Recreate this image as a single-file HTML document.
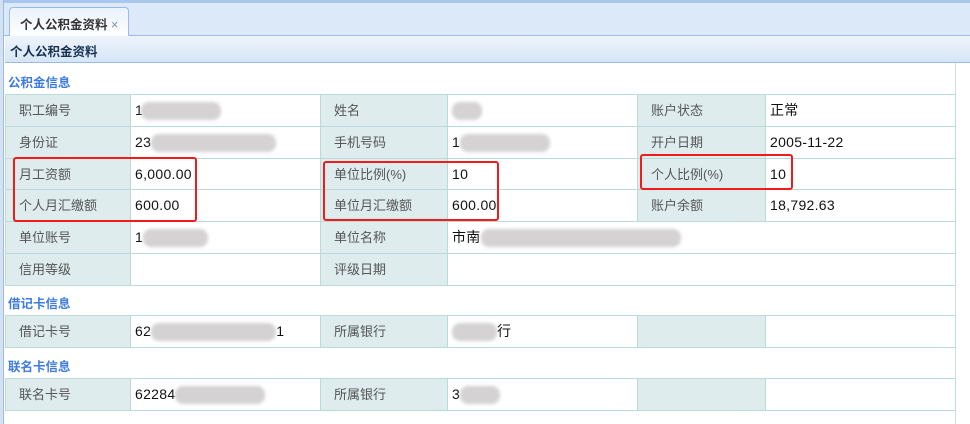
<!DOCTYPE html>
<html><head><meta charset="utf-8"><style>
*{margin:0;padding:0;box-sizing:border-box}
body{width:970px;height:424px;background:#fff;position:relative;overflow:hidden;font-family:"Liberation Sans","Noto Sans CJK SC",sans-serif;font-size:13px;color:#222}
.a{position:absolute}
.lab{position:absolute;background:#deecee;color:#555;padding-left:13px;line-height:31px;border:1px solid #b9dcd8}
.val{position:absolute;background:#fff;padding-left:4px;line-height:31px;border:1px solid #b9dcd8;color:#111;font-size:14px;letter-spacing:0.3px}
.sec{position:absolute;left:8px;color:#3d7be3;font-weight:bold;font-size:12.5px}
.blur{display:inline-block;vertical-align:middle;height:18px;background:#d4d2d2;border-radius:8px;filter:blur(1.5px)}
.red{position:absolute;border:2.5px solid #f21b1b;border-radius:3px}
</style></head><body>
<div class="a" style="left:0;top:0;width:970px;height:36px;background:#dce9f9;border-top:3px solid #a9c6ec;border-bottom:1px solid #99bbe8"></div>
<div class="a" style="left:0;top:0;width:4px;height:424px;background:#d3e1f1;border-right:1px solid #99bbe8"></div>
<div class="a" style="left:9px;top:7px;width:120px;height:30px;background:linear-gradient(#eaf2fc,#fff);border:1px solid #99bbe8;border-bottom:none;border-radius:4px 4px 0 0;font-size:12.5px;font-weight:bold;color:#333;padding:6px 0 0 10px">个人公积金资料 <span style="color:#7a8fb0;font-weight:normal">×</span></div>
<div class="a" style="left:5px;top:36px;width:965px;height:27px;background:linear-gradient(#eef4fc,#d6e5f7);border-bottom:1px solid #99bbe8;font-weight:bold;font-size:12.5px;color:#15314f;padding:5px 0 0 5px">个人公积金资料</div>
<div class="a" style="left:955px;top:63px;width:1px;height:361px;background:#cfe0e0"></div>
<div class="a" style="left:5px;top:94px;width:950px;height:1px;background:#b9dcd8"></div>
<div class="sec" style="top:72px">公积金信息</div>
<div class="sec" style="top:293px">借记卡信息</div>
<div class="sec" style="top:356px">联名卡信息</div>

<div class="lab" style="left:5px;top:94px;width:126px;height:33px">职工编号</div>
<div class="val" style="left:130px;top:94px;width:191px;height:33px">1<span class="blur" style="width:80px;margin-left:-2px"></span></div>
<div class="lab" style="left:320px;top:94px;width:128px;height:33px">姓名</div>
<div class="val" style="left:447px;top:94px;width:191px;height:33px"><span class="blur" style="width:30px"></span></div>
<div class="lab" style="left:637px;top:94px;width:129px;height:33px">账户状态</div>
<div class="val" style="left:765px;top:94px;width:191px;height:33px">正常</div>

<div class="lab" style="left:5px;top:126px;width:126px;height:33px">身份证</div>
<div class="val" style="left:130px;top:126px;width:191px;height:33px">23<span class="blur" style="width:125px"></span></div>
<div class="lab" style="left:320px;top:126px;width:128px;height:33px">手机号码</div>
<div class="val" style="left:447px;top:126px;width:191px;height:33px">1<span class="blur" style="width:90px"></span></div>
<div class="lab" style="left:637px;top:126px;width:129px;height:33px">开户日期</div>
<div class="val" style="left:765px;top:126px;width:191px;height:33px">2005-11-22</div>

<div class="lab" style="left:5px;top:158px;width:126px;height:32px">月工资额</div>
<div class="val" style="left:130px;top:158px;width:191px;height:32px">6,000.00</div>
<div class="lab" style="left:320px;top:158px;width:128px;height:32px">单位比例(%)</div>
<div class="val" style="left:447px;top:158px;width:191px;height:32px">10</div>
<div class="lab" style="left:637px;top:158px;width:129px;height:32px">个人比例(%)</div>
<div class="val" style="left:765px;top:158px;width:191px;height:32px">10</div>

<div class="lab" style="left:5px;top:189px;width:126px;height:33px">个人月汇缴额</div>
<div class="val" style="left:130px;top:189px;width:191px;height:33px">600.00</div>
<div class="lab" style="left:320px;top:189px;width:128px;height:33px">单位月汇缴额</div>
<div class="val" style="left:447px;top:189px;width:191px;height:33px">600.00</div>
<div class="lab" style="left:637px;top:189px;width:129px;height:33px">账户余额</div>
<div class="val" style="left:765px;top:189px;width:191px;height:33px">18,792.63</div>

<div class="lab" style="left:5px;top:221px;width:126px;height:33px">单位账号</div>
<div class="val" style="left:130px;top:221px;width:191px;height:33px">1<span class="blur" style="width:65px"></span></div>
<div class="lab" style="left:320px;top:221px;width:128px;height:33px">单位名称</div>
<div class="val" style="left:447px;top:221px;width:509px;height:33px">市南<span class="blur" style="width:200px"></span></div>

<div class="lab" style="left:5px;top:253px;width:126px;height:33px">信用等级</div>
<div class="val" style="left:130px;top:253px;width:191px;height:33px"></div>
<div class="lab" style="left:320px;top:253px;width:128px;height:33px">评级日期</div>
<div class="val" style="left:447px;top:253px;width:509px;height:33px"></div>

<div class="a" style="left:5px;top:315px;width:950px;height:1px;background:#b9dcd8"></div>
<div class="lab" style="left:5px;top:315px;width:126px;height:33px">借记卡号</div>
<div class="val" style="left:130px;top:315px;width:191px;height:33px">62<span class="blur" style="width:125px"></span>1</div>
<div class="lab" style="left:320px;top:315px;width:128px;height:33px">所属银行</div>
<div class="val" style="left:447px;top:315px;width:191px;height:33px"><span class="blur" style="width:45px"></span>行</div>
<div class="lab" style="left:637px;top:315px;width:129px;height:33px"></div>
<div class="val" style="left:765px;top:315px;width:191px;height:33px"></div>

<div class="a" style="left:5px;top:378px;width:950px;height:1px;background:#b9dcd8"></div>
<div class="lab" style="left:5px;top:378px;width:126px;height:33px">联名卡号</div>
<div class="val" style="left:130px;top:378px;width:191px;height:33px">62284<span class="blur" style="width:90px"></span></div>
<div class="lab" style="left:320px;top:378px;width:128px;height:33px">所属银行</div>
<div class="val" style="left:447px;top:378px;width:191px;height:33px">3<span class="blur" style="width:40px"></span></div>
<div class="lab" style="left:637px;top:378px;width:129px;height:33px"></div>
<div class="val" style="left:765px;top:378px;width:191px;height:33px"></div>

<div class="red" style="left:13px;top:157px;width:184px;height:65px"></div>
<div class="red" style="left:323px;top:161px;width:176px;height:60px"></div>
<div class="red" style="left:640px;top:154px;width:153px;height:36px"></div>
</body></html>
